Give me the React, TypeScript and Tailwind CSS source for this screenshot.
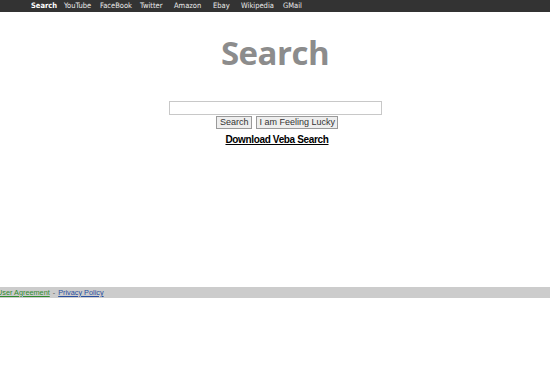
export default function App() {
  const links = [
    { label: 'Search', w: 'w-[33px]', bold: true },
    { label: 'YouTube', w: 'w-[36px]' },
    { label: 'FaceBook', w: 'w-[40px]' },
    { label: 'Twitter', w: 'w-[34px]' },
    { label: 'Amazon', w: 'w-[39px]' },
    { label: 'Ebay', w: 'w-[28px]' },
    { label: 'Wikipedia', w: 'w-[42px]' },
    { label: 'GMail', w: 'w-[30px]' },
  ]

  return (
    <div className="w-[550px] h-[366px] bg-white font-['Liberation_Sans',Arial,sans-serif] overflow-hidden">
      {/* Top nav */}
      <div className="h-[12px] bg-[#333333] flex items-center pl-[31px] text-[7.5px] leading-none text-[#ececec] font-['DejaVu_Sans_Condensed','Liberation_Sans',sans-serif]">
        {links.map((l) => (
          <span key={l.label} className={`${l.w} whitespace-nowrap ${l.bold ? 'font-bold text-white' : ''}`}>
            {l.label}
          </span>
        ))}
      </div>

      {/* Main */}
      <div className="h-[275px] flex flex-col items-center">
        <div className="mt-[24px] h-[60px] text-[33px] leading-none font-bold text-[#8c8c8c] font-['Open_Sans',sans-serif] tracking-[-0.5px]">
          Search
        </div>
        <input
          type="text"
          className="mt-[5px] w-[213px] h-[14px] border border-[#c8c8c8] bg-white outline-none"
        />
        <div className="flex gap-[4px] mt-[1px] ml-[4px]">
          <button className="h-[13px] px-[3px] text-[9px] leading-none bg-[#eeeeee] border border-[#9a9a9a] text-[#333]">
            Search
          </button>
          <button className="h-[13px] px-[2px] text-[9px] leading-none bg-[#eeeeee] border border-[#9a9a9a] text-[#333]">
            I am Feeling Lucky
          </button>
        </div>
        <a className="mt-[6px] ml-[4px] text-[10px] leading-none font-bold underline text-black tracking-[-0.35px]">
          Download Veba Search
        </a>
      </div>

      {/* Footer */}
      <div className="h-[11px] bg-[#cccccc] flex items-center text-[7.3px] leading-none">
        <span className="-ml-[3px] text-[#2e8b2e] underline whitespace-nowrap">User Agreement</span>
        <span className="mx-[3px] text-[#555]">-</span>
        <span className="text-[#2a4fa0] underline whitespace-nowrap">Privacy Policy</span>
      </div>
    </div>
  )
}
